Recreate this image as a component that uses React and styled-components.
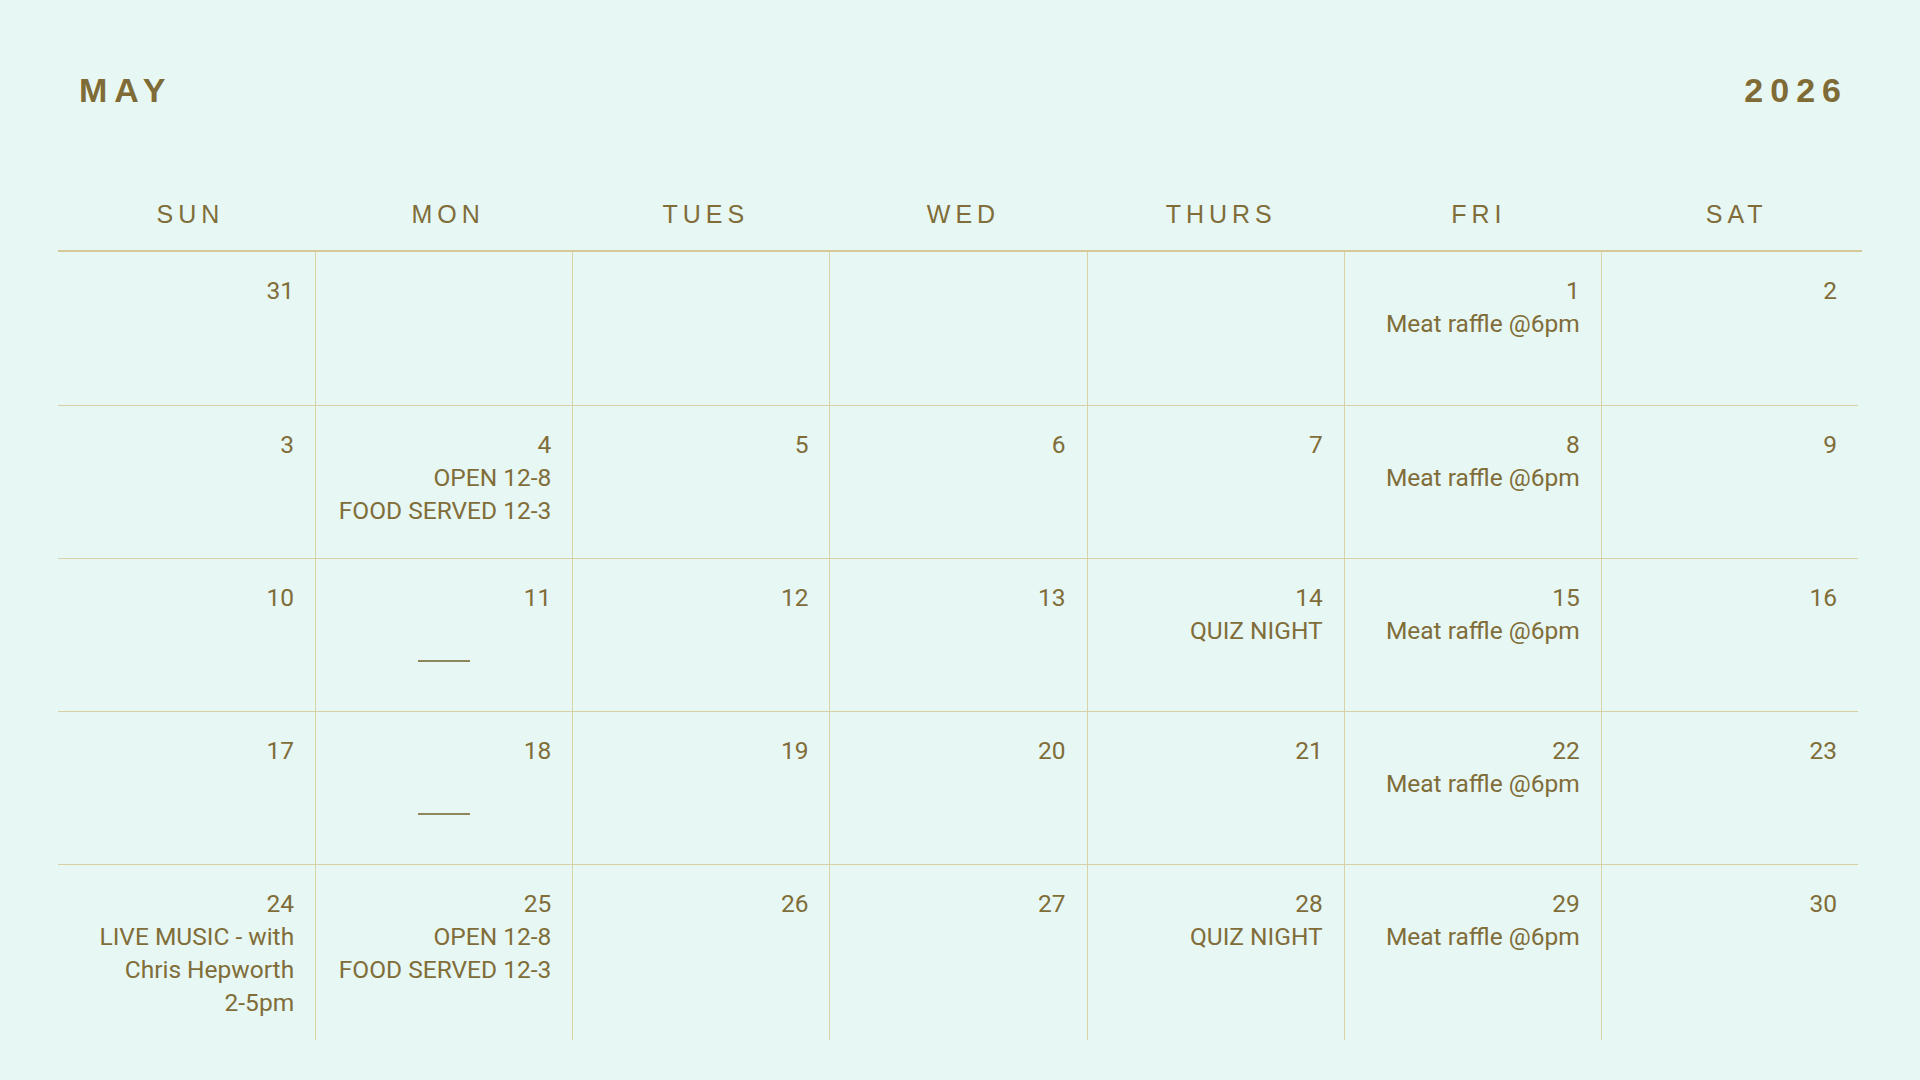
import React from 'react';
import styled, { createGlobalStyle } from 'styled-components';

const GlobalStyle = createGlobalStyle`
  html, body {
    margin: 0;
    padding: 0;
    background: #e7f7f3;
  }
  body {
    font-family: "Liberation Sans", Arial, sans-serif;
    color: #806d39;
  }
  *, *::before, *::after {
    box-sizing: border-box;
  }
`;

const MEAT = 'Meat raffle @6pm';
const OPEN = ['OPEN 12-8', 'FOOD SERVED 12-3'];
const QUIZ = 'QUIZ NIGHT';

const days = ['SUN', 'MON', 'TUES', 'WED', 'THURS', 'FRI', 'SAT'];

const weeks = [
  [{ d: 31 }, {}, {}, {}, {}, { d: 1, ev: [MEAT] }, { d: 2 }],
  [{ d: 3 }, { d: 4, ev: OPEN }, { d: 5 }, { d: 6 }, { d: 7 }, { d: 8, ev: [MEAT] }, { d: 9 }],
  [{ d: 10 }, { d: 11, rule: true }, { d: 12 }, { d: 13 }, { d: 14, ev: [QUIZ] }, { d: 15, ev: [MEAT] }, { d: 16 }],
  [{ d: 17 }, { d: 18, rule: true }, { d: 19 }, { d: 20 }, { d: 21 }, { d: 22, ev: [MEAT] }, { d: 23 }],
  [
    { d: 24, ev: ['LIVE MUSIC - with', 'Chris Hepworth', '2-5pm'] },
    { d: 25, ev: OPEN },
    { d: 26 },
    { d: 27 },
    { d: 28, ev: [QUIZ] },
    { d: 29, ev: [MEAT] },
    { d: 30 },
  ],
];

export default function App() {
  return (
    <Page>
      <GlobalStyle />
      <Header>
        <Title>MAY</Title>
        <Title>2026</Title>
      </Header>

      <Calendar>
        <DayHeads>
          {days.map((name) => (
            <DayName key={name}>{name}</DayName>
          ))}
        </DayHeads>

        {weeks.map((week, i) => (
          <Week key={i} $last={i === weeks.length - 1}>
            {week.map((cell, j) => (
              <Cell key={j}>
                {cell.d && <Num>{cell.d}</Num>}
                {cell.ev && cell.ev.map((line) => <Event key={line}>{line}</Event>)}
                {cell.rule && <Rule />}
              </Cell>
            ))}
          </Week>
        ))}
      </Calendar>
    </Page>
  );
}

const Page = styled.div`
  min-height: 100vh;
  background: #e7f7f3;
  padding-top: 70px;
`;

const Header = styled.header`
  display: flex;
  justify-content: space-between;
  align-items: center;
  padding: 0 72px 0 79px;
`;

const Title = styled.h1`
  margin: 0;
  font-size: 34px;
  line-height: 40px;
  font-weight: 700;
  letter-spacing: 7px;
  color: #7f6b36;
`;

const Calendar = styled.section`
  margin: 89px 62px 0 58px;
`;

const DayHeads = styled.div`
  display: grid;
  grid-template-columns: repeat(7, 1fr);
  margin-right: -4px;
  border-bottom: 2px solid #d6c998;
`;

const DayName = styled.div`
  text-align: center;
  font-size: 25px;
  line-height: 30px;
  letter-spacing: 5px;
  padding: 0 0 21px 7px;
  color: #806d39;
`;

const Week = styled.div`
  display: grid;
  grid-template-columns: repeat(7, 1fr);
  height: ${(p) => (p.$last ? 176 : 153)}px;
  & + & {
    border-top: 1px solid #d7d0a6;
  }
`;

const Cell = styled.div`
  display: flex;
  flex-direction: column;
  align-items: flex-end;
  padding: 22px 21px 0 0;
  border-left: 1px solid #d9d1a8;
  font-family: Roboto, "Liberation Sans", sans-serif;
  font-size: 24.5px;
  line-height: 33px;
  text-align: right;

  &:first-child {
    border-left: none;
  }
`;

const Num = styled.div``;

const Event = styled.div`
  white-space: nowrap;
`;

const Rule = styled.div`
  align-self: center;
  width: 52px;
  height: 2px;
  margin: 46px 0 0 21px;
  background: #8f865e;
`;
